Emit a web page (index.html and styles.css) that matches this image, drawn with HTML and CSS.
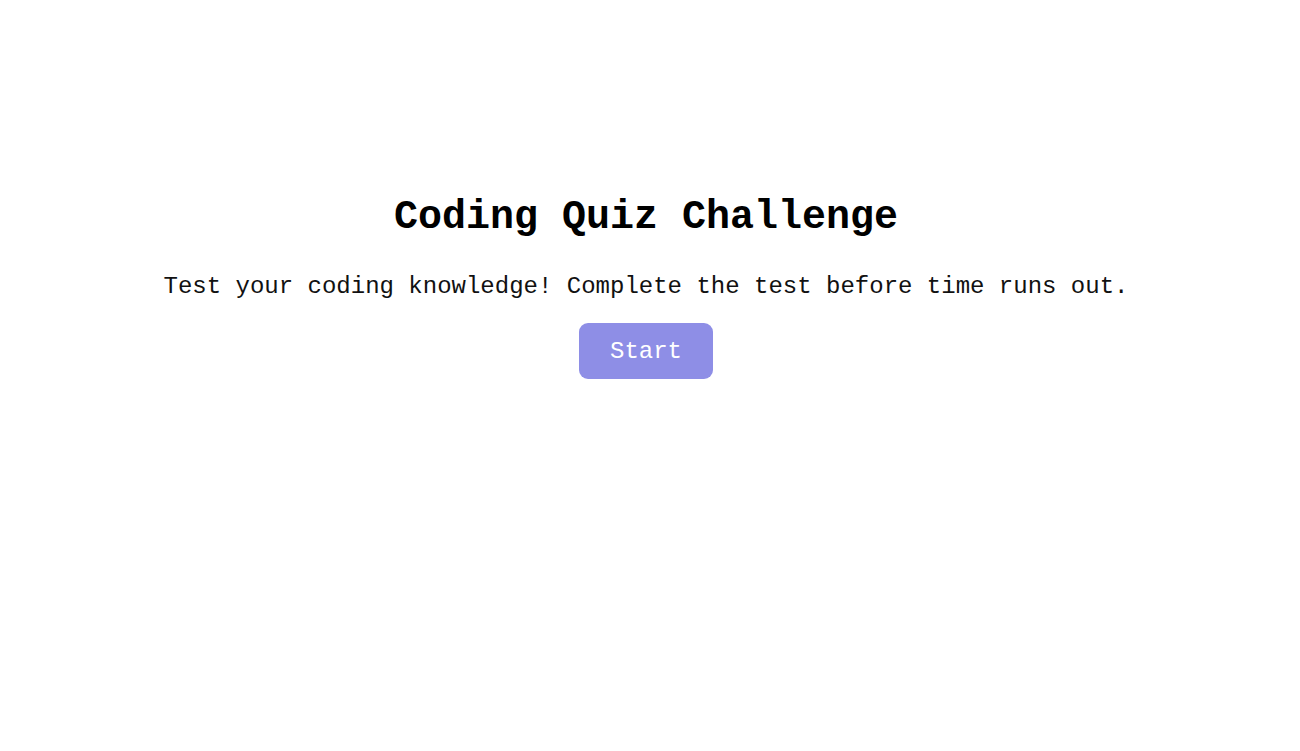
FILE: index.html
```html
<!DOCTYPE html>
<html>
<head>
<meta charset="utf-8">
<link rel="stylesheet" href="styles.css">
</head>
<body>
<main class="intro">
  <h1 class="title">Coding Quiz Challenge</h1>
  <p class="lead">Test your coding knowledge! Complete the test before time runs out.</p>
  <button class="start">Start</button>
</main>
</body>
</html>
```
FILE: styles.css
```css
html, body {
  margin: 0;
  padding: 0;
  background: #fff;
}
body {
  font-family: "Liberation Mono", "Courier New", monospace;
  color: #000;
}
.intro {
  display: flex;
  flex-direction: column;
  align-items: center;
  padding: 195px 8px 0 0;
}
.title {
  font-size: 40px;
  font-weight: bold;
  margin: 0;
  line-height: 46px;
}
.lead {
  font-size: 24px;
  margin: 32px 0 0;
  line-height: 28px;
  color: #111;
}
.start {
  margin-top: 22px;
  font-family: inherit;
  font-size: 24px;
  color: #fff;
  background: #8e8ee6;
  border: none;
  border-radius: 9px;
  padding: 0 31px;
  height: 56px;
  cursor: pointer;
}
```
